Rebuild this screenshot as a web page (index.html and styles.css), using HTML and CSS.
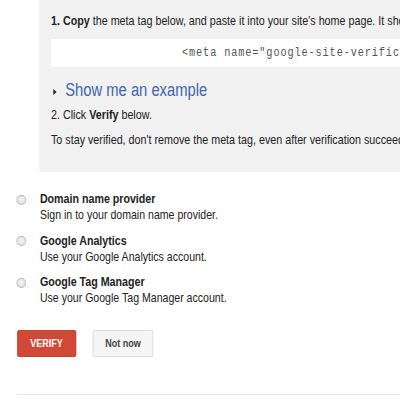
FILE: index.html
```html
<!DOCTYPE html>
<html>
<head>
<meta charset="utf-8">
<link rel="stylesheet" href="styles.css">
</head>
<body>
<div class="page">
  <div class="panel">
    <p class="line first"><b>1. Copy</b> the meta tag below, and paste it into your site's home page. It should go in the &lt;head&gt; section, before the first &lt;body&gt; section.</p>
    <div class="code">&lt;meta name="google-site-verification" content="xYz1aBcD2eFgH3iJkL4mNoP5qRsT6uVwX7yZ8aBcDeF" /&gt;</div>
    <div class="example"><span class="tri"></span><a class="link">Show me an example</a></div>
    <p class="line step2">2. Click <b>Verify</b> below.</p>
    <p class="line note">To stay verified, don't remove the meta tag, even after verification succeeds.</p>
  </div>

  <div class="options">
    <div class="option">
      <span class="radio"></span>
      <div class="opt-text">
        <div class="opt-title">Domain name provider</div>
        <div class="opt-sub">Sign in to your domain name provider.</div>
      </div>
    </div>
    <div class="option">
      <span class="radio"></span>
      <div class="opt-text">
        <div class="opt-title">Google Analytics</div>
        <div class="opt-sub">Use your Google Analytics account.</div>
      </div>
    </div>
    <div class="option">
      <span class="radio"></span>
      <div class="opt-text">
        <div class="opt-title">Google Tag Manager</div>
        <div class="opt-sub">Use your Google Tag Manager account.</div>
      </div>
    </div>
  </div>

  <div class="actions">
    <button class="btn btn-primary">VERIFY</button>
    <button class="btn btn-secondary">Not now</button>
  </div>

  <div class="rule"></div>
</div>
</body>
</html>
```

FILE: styles.css
```css
html, body {
  margin: 0;
  padding: 0;
  background: #ffffff;
  overflow: hidden;
}

/* The reference is horizontally condensed; the page is laid out
   at full width and condensed as a whole. */
.page {
  width: 488px;
  height: 400px;
  overflow: hidden;
  transform: scaleX(0.82);
  transform-origin: 0 0;
  font-family: "Liberation Sans", Arial, sans-serif;
  color: #222222;
}

.panel {
  margin-left: 47.6px;
  width: 620px;
  background: #f1f1f1;
  padding: 12px 0 24px 14.6px;
  white-space: nowrap;
}

.line {
  margin: 0;
  font-size: 13.1px;
  line-height: 16px;
}

.first {
  margin-top: 0.5px;
}

.step2 {
  margin-top: 6px;
}

.note {
  margin-top: 9px;
}

.code {
  margin-top: 10.5px;
  height: 28px;
  line-height: 28px;
  background: #ffffff;
  padding-left: 159.8px;
  font-family: "Liberation Mono", "Courier New", monospace;
  font-size: 12.5px;
  letter-spacing: 1.07px;
  color: #555555;
  overflow: hidden;
}

.example {
  margin-top: 12px;
  display: flex;
  align-items: center;
  height: 22px;
}

.tri {
  width: 0;
  height: 0;
  margin-left: 2.4px;
  margin-right: 11px;
  margin-top: 4px;
  border-left: 4.9px solid #222222;
  border-top: 3.5px solid transparent;
  border-bottom: 3.5px solid transparent;
}

.link {
  font-size: 18px;
  line-height: 22px;
  color: #4065b4;
  text-decoration: none;
}

.options {
  margin-top: 19px;
  display: flex;
  flex-direction: column;
  gap: 10.5px;
}

.option {
  display: flex;
  align-items: flex-start;
  padding-left: 20.2px;
}

.radio {
  width: 10.2px;
  height: 8px;
  margin-top: 3.5px;
  margin-right: 16.3px;
  border: 1px solid #b8b8b8;
  border-radius: 50%;
  background: radial-gradient(circle at 50% 40%, #f6f6f6 0%, #d6d6d6 100%);
  flex: none;
}

.opt-title {
  font-size: 13px;
  line-height: 16px;
  font-weight: bold;
  color: #222222;
}

.opt-sub {
  font-size: 12.9px;
  line-height: 15px;
  color: #222222;
}

.actions {
  margin-top: 24.5px;
  padding-left: 20.7px;
  display: flex;
  gap: 20.7px;
}

.btn {
  height: 27px;
  padding: 0;
  border-radius: 2px;
  font-family: "Liberation Sans", Arial, sans-serif;
  font-size: 11px;
  font-weight: bold;
  cursor: pointer;
}

.btn-primary {
  width: 72px;
  background: #d14836;
  border: 1px solid #c53727;
  color: #ffffff;
}

.btn-secondary {
  width: 73.2px;
  background: #f5f5f5;
  border: 1px solid #dcdcdc;
  color: #444444;
}

.rule {
  margin-top: 37px;
  margin-left: 20.7px;
  border-top: 1px solid #e5e5e5;
}
```
